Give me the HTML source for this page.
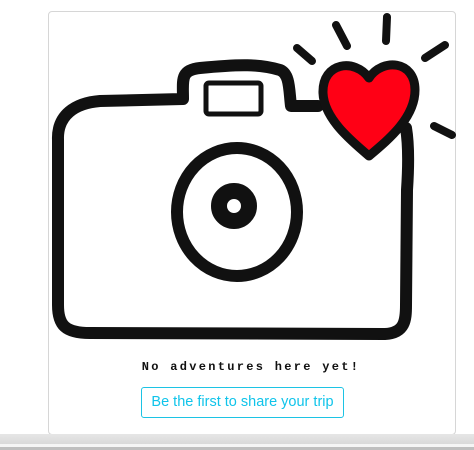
<!DOCTYPE html>
<html><head><meta charset="utf-8"><style>
html,body{margin:0;padding:0;width:474px;height:450px;overflow:hidden;background:#fff;font-family:"Liberation Sans",sans-serif}
.card{position:absolute;left:48px;top:11px;width:406px;height:422px;border:1px solid #d6d6d6;border-radius:4px;background:#fff}
.txt{position:absolute;left:140px;top:360px;width:222px;text-align:center;font-size:12px;letter-spacing:2.3px;color:#111;font-family:"Liberation Mono",monospace;font-weight:bold}
.btn{position:absolute;left:141px;top:387px;width:201px;height:29px;border:1px solid #1cc3e4;border-radius:3px;color:#10c4ea;font-size:14.5px;line-height:29px;text-align:center}
.b1{position:absolute;left:0;top:434px;width:474px;height:10px;background:linear-gradient(#e6e6e6,#d9d9d9)}
.b2{position:absolute;left:0;top:444px;width:474px;height:3px;background:#f5f5f5}
.b3{position:absolute;left:0;top:447px;width:474px;height:3px;background:#bfbfbf}
</style></head><body>
<div class="card"></div>
<svg style="position:absolute;left:0;top:0" width="474" height="434" viewBox="0 0 474 434">
<g fill="none" stroke="#111" stroke-width="12" stroke-linecap="round" stroke-linejoin="round">
<path d="M58,140 C57,115 75,103 100,101 L183,99 C183,80 180,70 200,68 C240,64 260,64 280,70 C290,74 289,90 291,106 L318,106"/>
<path d="M58,140 L58,305 C58,325 65,333 90,333 L385,334 C405,333 406,320 406,305 L407,190 C409,160 408,140 406,128"/>
<ellipse cx="237" cy="212" rx="60" ry="64"/>
<ellipse cx="234" cy="206" rx="15" ry="15" stroke-width="16"/>
<path d="M297,48 L312,61 M336,25 L347,46 M387,17 L386,41 M425,58 L445,45 M434,126 L452,135" stroke-width="8"/>
</g>
<rect x="206" y="83" width="55" height="31" rx="3" fill="none" stroke="#111" stroke-width="5"/>
<path d="M369,78 C355,58 322,62 323,93 C324,118 350,140 369,156 C388,140 415,118 415,90 C415,60 382,58 369,78Z" fill="#ff0015" stroke="#111" stroke-width="9" stroke-linejoin="round"/>
</svg>
<div class="txt">No adventures here yet!</div>
<div class="btn">Be the first to share your trip</div>
<div class="b1"></div><div class="b2"></div><div class="b3"></div>
</body></html>
